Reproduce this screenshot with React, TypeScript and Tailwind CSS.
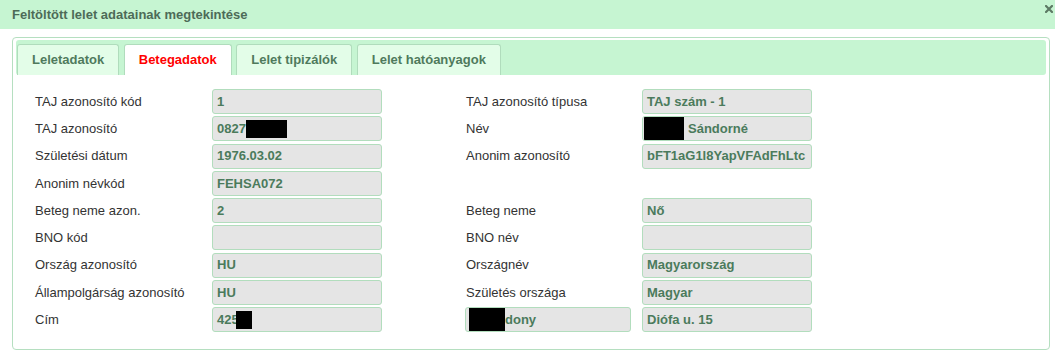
const tabs = ["Leletadatok", "Betegadatok", "Lelet tipizálók", "Lelet hatóanyagok"];

type Row = {
  label: string;
  value: React.ReactNode;
  rightLabel?: React.ReactNode;
  rightValue?: React.ReactNode;
};

function Redacted({ w, h, className = "" }: { w: number; h: number; className?: string }) {
  return <span className={`inline-block bg-black align-middle ${className}`} style={{ width: w, height: h }} />;
}

function Field({ children, className = "w-[170px]" }: { children?: React.ReactNode; className?: string }) {
  return (
    <div
      className={`flex h-[25px] items-center overflow-hidden whitespace-nowrap rounded-[3px] border border-[#b2ddbd] bg-[#e5e5e5] px-[4px] text-[13px] font-bold text-[#4b7b5c] ${className}`}
    >
      {children}
    </div>
  );
}

const rows: Row[] = [
  { label: "TAJ azonosító kód", value: "1", rightLabel: "TAJ azonosító típusa", rightValue: "TAJ szám - 1" },
  {
    label: "TAJ azonosító",
    value: (
      <>
        0827
        <Redacted w={41} h={18} />
      </>
    ),
    rightLabel: "Név",
    rightValue: (
      <>
        <span className="-ml-[3px] mr-[4px] inline-block h-[23px] w-[40px] bg-black" />
        Sándorné
      </>
    ),
  },
  { label: "Születési dátum", value: "1976.03.02", rightLabel: "Anonim azonosító", rightValue: "bFT1aG1l8YapVFAdFhLtc" },
  { label: "Anonim névkód", value: "FEHSA072" },
  { label: "Beteg neme azon.", value: "2", rightLabel: "Beteg neme", rightValue: "Nő" },
  { label: "BNO kód", value: "", rightLabel: "BNO név", rightValue: "" },
  { label: "Ország azonosító", value: "HU", rightLabel: "Országnév", rightValue: "Magyarország" },
  { label: "Állampolgárság azonosító", value: "HU", rightLabel: "Születés országa", rightValue: "Magyar" },
  {
    label: "Cím",
    value: (
      <>
        425
        <Redacted w={16} h={18} className="-ml-[3px]" />
      </>
    ),
    rightLabel: (
      <Field className="-ml-[1px] w-[166px]">
        <span className="-ml-[1px] inline-block h-[23px] w-[36px] bg-black" />
        dony
      </Field>
    ),
    rightValue: "Diófa u. 15",
  },
];

export default function App() {
  return (
    <div className="h-[351px] w-[1055px] bg-white font-['Liberation_Sans',Arial,sans-serif]">
      <div className="flex h-[29px] items-center justify-between bg-[#c6f5d2] pl-[12px] pr-[2px]">
        <span className="text-[13px] font-bold text-[#4d6b58]">Feltöltött lelet adatainak megtekintése</span>
        <svg width="8" height="8" viewBox="0 0 8 8" className="-mt-[12px]">
          <path d="M1 1 L7 7 M7 1 L1 7" stroke="#5c7a64" strokeWidth="2.2" strokeLinecap="square" />
        </svg>
      </div>

      <div className="ml-[12px] mt-[8px] h-[313px] w-[1038px] rounded-[4px] border border-[#b5dfc0] p-[3px] pt-[2px]">
        <div className="flex h-[35px] items-end gap-[4.5px] rounded-[3px] bg-[#c6f5d2] px-[1px]">
          {tabs.map((t) => {
            const active = t === "Betegadatok";
            return (
              <div
                key={t}
                className={`flex h-[31px] items-center rounded-t-[3px] border border-b-0 border-[#b0dcbc] px-[14px] text-[13px] font-bold ${
                  active ? "bg-white text-[#ff0000]" : "bg-[#e3fde8] text-[#4f7a5c]"
                }`}
              >
                {t}
              </div>
            );
          })}
        </div>

        <div className="mt-[14px] grid grid-cols-[177px_170px_84px_176px_170px] gap-y-[2.25px] pl-[19px] text-[13px] text-[#333333]">
          {rows.map((r, i) => (
            <div key={i} className="contents">
              <div className="flex h-[25px] items-center">{r.label}</div>
              <Field>{r.value}</Field>
              <div />
              <div className="flex h-[25px] items-center">{r.rightLabel}</div>
              {r.rightValue !== undefined ? <Field>{r.rightValue}</Field> : <div />}
            </div>
          ))}
        </div>
      </div>
    </div>
  );
}
